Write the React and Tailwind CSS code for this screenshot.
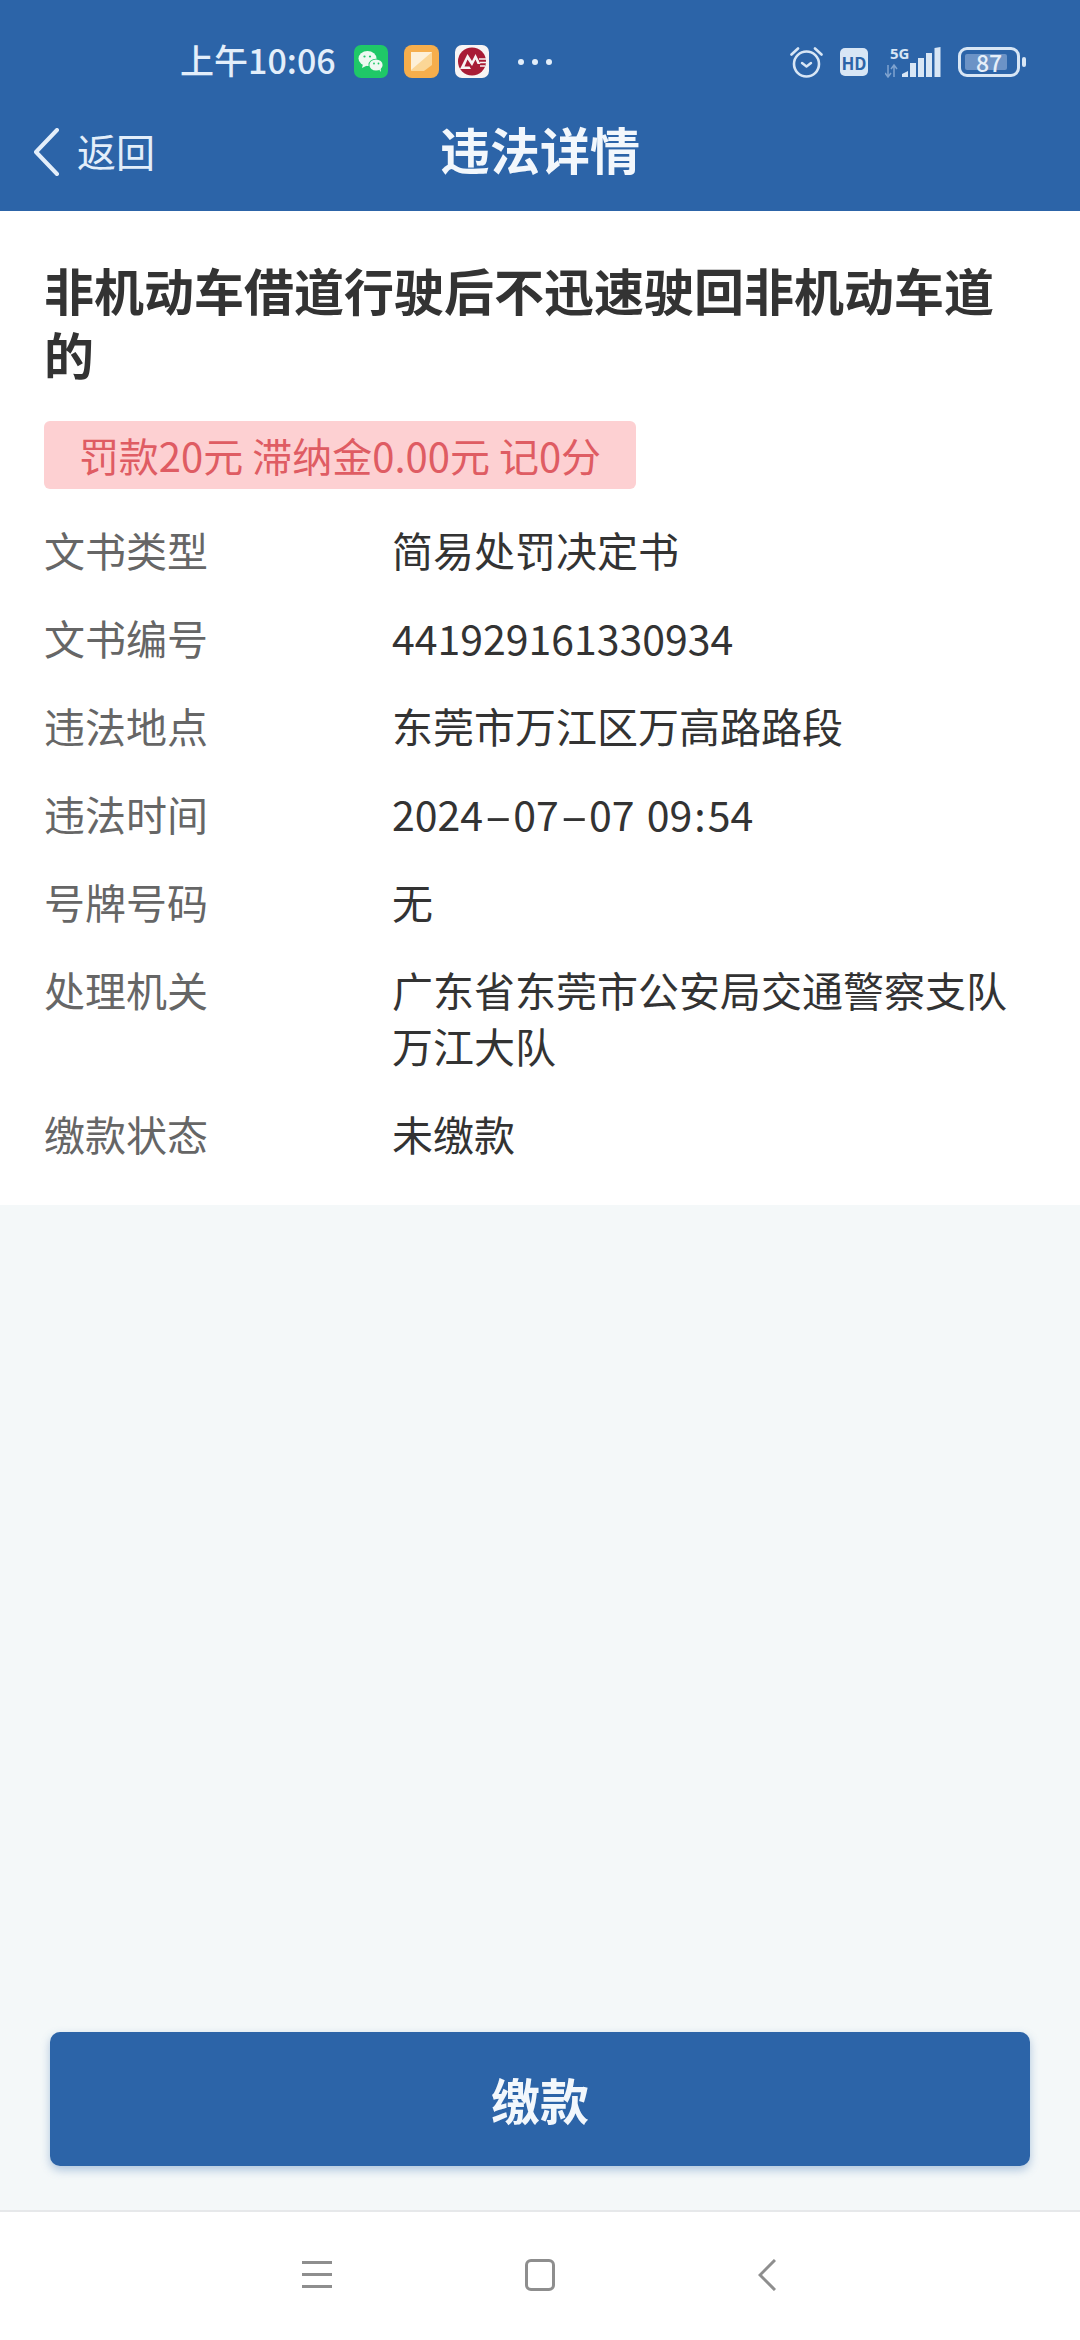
import React from 'react'

const Dash = () => (
  <span className="inline-block mx-[8px] scale-x-[2]">-</span>
)

const rows = [
  { label: '文书类型', value: '简易处罚决定书' },
  { label: '文书编号', value: '441929161330934' },
  { label: '违法地点', value: '东莞市万江区万高路路段' },
  { label: '违法时间', value: '2024-07-07 09:54' },
  { label: '号牌号码', value: '无' },
  { label: '处理机关', value: '广东省东莞市公安局交通警察支队万江大队' },
  { label: '缴款状态', value: '未缴款' },
]

const WeChatIcon = () => (
  <svg width="34" height="33" viewBox="0 0 34 33">
    <rect width="34" height="33" rx="7" fill="#1fc868" />
    <ellipse cx="13.5" cy="13.5" rx="9" ry="7.5" fill="#eef9f2" />
    <path d="M9 19l-1 4 5-2.5z" fill="#eef9f2" />
    <ellipse cx="22" cy="20" rx="7.5" ry="6.2" fill="#1fc868" />
    <ellipse cx="22" cy="20" rx="6.6" ry="5.5" fill="#eef9f2" />
    <path d="M25 24.5l2 2.5-.5-4z" fill="#eef9f2" />
    <circle cx="10.5" cy="11.5" r="1.1" fill="#1fc868" />
    <circle cx="16" cy="11.5" r="1.1" fill="#1fc868" />
    <circle cx="20" cy="18.5" r="0.9" fill="#1fc868" />
    <circle cx="24.5" cy="18.5" r="0.9" fill="#1fc868" />
  </svg>
)

const NotesIcon = () => (
  <svg width="35" height="33" viewBox="0 0 35 33">
    <rect width="35" height="33" rx="8" fill="#f6ae4c" />
    <path d="M7 7h21v13l-8 6H7z" fill="#fbd696" />
    <path d="M7 7h21L7 25z" fill="#fdf0d8" />
  </svg>
)

const BankIcon = () => (
  <svg width="34" height="33" viewBox="0 0 34 33">
    <rect width="34" height="33" rx="7" fill="#f8f4f4" />
    <circle cx="17" cy="16.5" r="14" fill="#a81c36" />
    <path d="M5 24L12.5 9l4.5 7 3.5-7 5 10h-3l-2-4.5-3.5 6.5-4.5-6.5-3 7h5l1.5 2.5z" fill="#f8f4f4" />
    <path d="M24 14h7M25 17.5h6M25 21h5" stroke="#f8f4f4" strokeWidth="1.3" />
  </svg>
)

const AlarmIcon = () => (
  <svg width="33" height="34" viewBox="0 0 33 34" fill="none" stroke="#d8e6f5" strokeLinecap="round">
    <circle cx="16.5" cy="19" r="12.5" strokeWidth="2.6" />
    <path d="M1.5 9.5L8 3.5M31.5 9.5L25 3.5" strokeWidth="2.6" />
    <path d="M12 18l4.5 3.5L21 18" strokeWidth="2.4" strokeLinejoin="round" />
  </svg>
)

const HdIcon = () => (
  <div className="w-[28px] h-[28px] rounded-[5px] bg-[#d8e6f5] flex items-center justify-center text-[17px] font-bold leading-none text-[#2c64a8]">
    HD
  </div>
)

const SignalIcon = () => (
  <svg width="57" height="31" viewBox="0 0 57 31">
    <text x="5" y="11.5" fontSize="15" fontWeight="700" fill="#d8e6f5" fontFamily="'Noto Sans', sans-serif">5G</text>
    <path d="M3 18v12M0 26l3 4 3-4M9 30V18M6 22l3-4 3 4" stroke="#7fa3cf" strokeWidth="1.5" fill="none" />
    <path d="M17 30v-3l6-3v6zM25 30V16h6v14zM33 30V11h6v19zM41 30V6h6v24zM49.5 30V1l6-1v30z" fill="#d8e6f5" />
  </svg>
)

const BatteryIcon = () => (
  <div className="flex items-center gap-[2px]">
    <div className="relative w-[62px] h-[30px] rounded-[9px] border-[3px] border-[#d8e6f5] p-[4px]">
      <div className="h-full w-[42px] rounded-[2px] bg-[#6c93c6]" />
      <div className="absolute inset-0 flex items-center justify-center text-[23px] font-medium leading-none text-[#e6eff9]">87</div>
    </div>
    <div className="w-[4px] h-[10px] rounded-[2px] bg-[#d8e6f5]" />
  </div>
)

const App = () => {
  return (
    <div className="w-[1080px] h-[2340px] flex flex-col bg-[#f4f8f9] font-['Noto_Sans_CJK_SC','Noto_Sans',sans-serif]">
      {/* Header with status bar */}
      <div className="h-[211px] bg-[#2c64a8]">
        <div className="h-[124px] pt-[45px] pl-[180px] pr-[54px] flex items-start">
          <span className="mr-[18px] h-[30px] flex items-center whitespace-nowrap text-[34px] font-medium leading-none text-[#e3eefa]">
            上午10:06
          </span>
          <div className="flex items-center gap-[16px]">
            <WeChatIcon />
            <NotesIcon />
            <BankIcon />
          </div>
          <div className="ml-[29px] mt-[14px] flex gap-[8px]">
            <span className="w-[6px] h-[6px] rounded-full bg-[#e3eefa]" />
            <span className="w-[6px] h-[6px] rounded-full bg-[#e3eefa]" />
            <span className="w-[6px] h-[6px] rounded-full bg-[#e3eefa]" />
          </div>
          <div className="ml-auto flex items-center">
            <AlarmIcon />
            <div className="ml-[17px]"><HdIcon /></div>
            <div className="ml-[17px]"><SignalIcon /></div>
            <div className="ml-[16px]"><BatteryIcon /></div>
          </div>
        </div>
        <div className="relative h-[56px] flex items-center pl-[32px]">
          <svg width="28" height="48" viewBox="0 0 28 48" fill="none" stroke="#e3eefa" strokeWidth="4" strokeLinecap="round" strokeLinejoin="round">
            <path d="M25 2L4 24l21 22" />
          </svg>
          <span className="ml-[17px] -mt-[4px] text-[39px] leading-none text-[#e3eefa]">返回</span>
          <div className="absolute inset-x-0 -top-[4px] h-[56px] flex items-center justify-center text-[50px] font-bold leading-none text-[#f2f7fc]">
            违法详情
          </div>
        </div>
      </div>

      {/* Violation details */}
      <div className="h-[994px] bg-white px-[44px] pt-[46px]">
        <h1 className="text-[50px] font-bold leading-[64px] text-[#333333]">
          非机动车借道行驶后不迅速驶回非机动车道的
        </h1>
        <div className="mt-[36px] w-[592px] h-[68px] rounded-[6px] bg-[#fdd0d2] flex items-center justify-center text-[40px] leading-none whitespace-pre text-[#df5c63]">
          罚款20元 滞纳金0.00元 记0分
        </div>
        <div className="mt-[16px] flex flex-col">
          {rows.map((row) => (
            <div key={row.label} className="flex py-[16px] text-[41px] leading-[56px]">
              <div className="w-[348px] shrink-0 text-[#666666]">{row.label}</div>
              <div className="w-[640px] text-[#333333]">
                {row.label === '违法时间' ? (
                  <>2024<Dash />07<Dash />07 <span className="ml-[3px]">09<span className="mx-[2px]">:</span>54</span></>
                ) : (
                  row.value
                )}
              </div>
            </div>
          ))}
        </div>
      </div>

      {/* Pay button */}
      <div className="flex-1 flex flex-col justify-end px-[50px] pb-[44px]">
        <button
          type="button"
          className="h-[134px] rounded-[10px] bg-[#2c64a8] shadow-[0_4px_10px_rgba(44,100,168,0.35)] text-[49px] font-bold text-[#f2f7fc]"
        >
          缴款
        </button>
      </div>

      {/* System navigation */}
      <div className="h-[130px] border-t-2 border-[#e6e8ea] bg-white flex items-start pt-[49px] pl-[302px]">
        <div className="w-[30px] h-[27px] flex flex-col justify-between">
          <span className="h-[3px] bg-[#8e8e8e]" />
          <span className="h-[3px] bg-[#8e8e8e]" />
          <span className="h-[3px] bg-[#8e8e8e]" />
        </div>
        <div className="ml-[193px] -mt-[2px] w-[30px] h-[32px] rounded-[6px] border-[3px] border-[#8e8e8e]" />
        <svg className="ml-[203px] -mt-[2px]" width="18" height="32" viewBox="0 0 18 32" fill="none" stroke="#8e8e8e" strokeWidth="3">
          <path d="M17 1L2 16l15 15" />
        </svg>
      </div>
    </div>
  )
}

export default App
